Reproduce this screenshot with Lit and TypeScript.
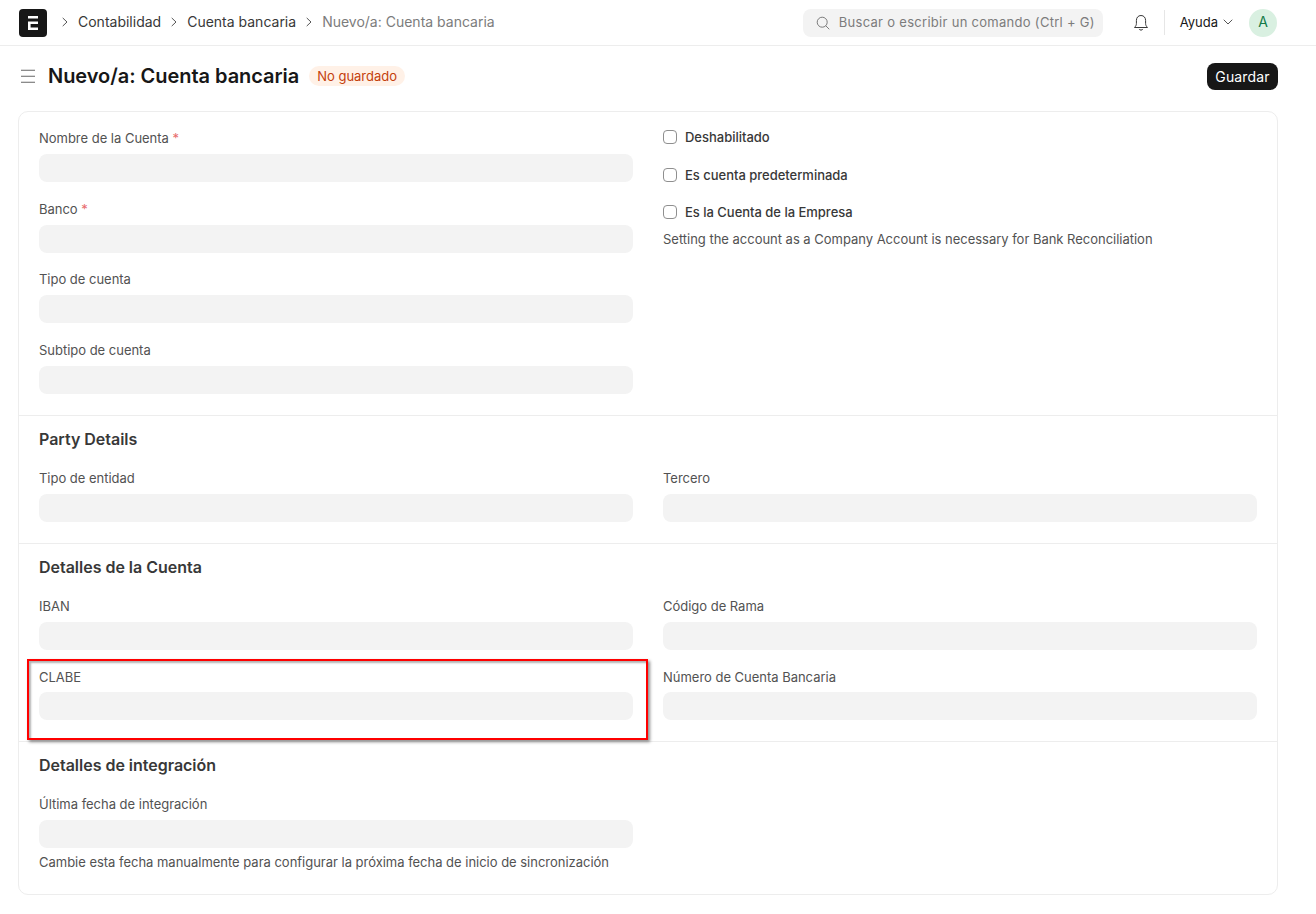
import { LitElement, html, css, svg } from "lit";
import { customElement } from "lit/decorators.js";

const chevron = svg`<svg class="chev" width="8" height="10" viewBox="0 0 8 10" fill="none"><path d="M2 1.2 L6 5 L2 8.8" stroke="#555" stroke-width="1" stroke-linecap="round" stroke-linejoin="round"/></svg>`;

@customElement("app-root")
export class AppRoot extends LitElement {
  static styles = css`
    :host { display: block; position: relative; width: 1316px; height: 914px; background: #fff; overflow: hidden;
      font-family: Inter, "Liberation Sans", sans-serif; font-size: 13px; color: #525252; letter-spacing: -0.018px; }
    * { box-sizing: border-box; }
    .nav { height: 46px; border-bottom: 1px solid #ededed; display: flex; align-items: center; padding: 0 39px 0 19px; }
    .logo { width: 28px; height: 28px; flex: none; display: block; margin-right: 14px; }
    .crumbs { display: flex; align-items: center; font-size: 14px; color: #383838; margin-bottom: 2px; letter-spacing: 0; }
    .chev { flex: none; margin-right: 9px; }
    .crumb { margin-right: 9px; }
    .crumb.cur { color: #7c7c7c; }
    .search { margin-left: auto; width: 300px; height: 28px; flex: none; background: #f3f3f3; border-radius: 8px; display: flex; align-items: center;
      padding-left: 13px; gap: 9px; color: #7c7c7c; letter-spacing: 0.29px; white-space: nowrap; }
    .search svg { flex: none; }
    .search span { margin-bottom: 2px; }
    .bell { margin-left: 30px; flex: none; }
    .divider { width: 1px; height: 25px; background: #e6e6e6; margin: 0 15px; flex: none; }
    .help { color: #171717; display: flex; align-items: center; gap: 5px; margin-bottom: 2px; }
    .avatar { width: 28px; height: 28px; border-radius: 50%; background: #d9f0e1; color: #137a48; display: flex; align-items: center; justify-content: center;
      font-size: 14px; margin-left: 16px; flex: none; padding-bottom: 2px; }
    .head { display: flex; align-items: center; height: 65px; padding: 0 38px 6px 21px; }
    .menu { flex: none; margin-right: 13px; }
    h1 { margin: 0; font-size: 20px; font-weight: 600; color: #171717; line-height: 28px; letter-spacing: -0.04px; }
    .badge { margin-left: 10px; height: 20px; padding: 0 8px; border-radius: 10px; background: #fff1e7; color: #c4400b; display: flex; align-items: center; }
    .save { margin-left: auto; margin-top: 2px; width: 71px; height: 27px; border: none; padding: 0; border-radius: 8px; background: #171717; color: #fff; font: inherit; font-size: 14px; letter-spacing: 0.01em; }
    .card { margin: 0 38px 0 18px; height: 784px; border: 1px solid #ededed; border-radius: 10px; }
    .section { padding: 0 20px 21px; border-bottom: 1px solid #ededed; }
    .section:last-child { border-bottom: none; }
    .section.first { padding-top: 18px; }
    .section.first .col { gap: 18.67px; }
    h2 { margin: 13px 0 21px; font-size: 16px; font-weight: 600; line-height: 20px; color: #383838; }
    .grid { display: grid; grid-template-columns: 594px 594px; column-gap: 30px; }
    .col { display: flex; flex-direction: column; gap: 18.5px; min-width: 0; }
    .label { display: block; height: 16px; line-height: 17.5px; margin-bottom: 8px; }
    .acct .col > div:last-child .label { line-height: 18px; }
    .req { color: #e86c6c; }
    .input { height: 28px; background: #f3f3f3; border-radius: 8px; }
    .desc { margin-top: 6px; line-height: 16px; }
    .checks { display: flex; flex-direction: column; gap: 21.5px; margin-top: -1px; }
    .check { display: flex; align-items: center; gap: 8px; height: 16px; color: #383838; font-weight: 500; }
    .box { width: 14px; height: 14px; flex: none; border: 1px solid #8f8f8f; border-radius: 4px; background: #fff; }
    .checkdesc { margin-top: -10.5px; }
    .mark { position: absolute; left: 27px; top: 659px; width: 621px; height: 81px; border: 2px solid #f00; box-shadow: 2px 2px 3px rgba(0,0,0,0.45), inset 2px 2px 2px rgba(0,0,0,0.3); pointer-events: none; }
  `;

  private field(label: string, req = false) {
    return html`<div><span class="label">${label}${req ? html` <span class="req">*</span>` : ""}</span><div class="input"></div></div>`;
  }

  render() {
    return html`
      <div class="nav">
        <svg class="logo" viewBox="0 0 28 28"><rect width="28" height="28" rx="4" fill="#171717"/><path d="M9 7h10v2.4H9zM9 12.6h10V15h-7.4v3.6H19V21H9z" fill="#fff"/></svg>
        <div class="crumbs">
          ${chevron}<span class="crumb">Contabilidad</span>
          ${chevron}<span class="crumb">Cuenta bancaria</span>
          ${chevron}<span class="crumb cur">Nuevo/a: Cuenta bancaria</span>
        </div>
        <div class="search">
          <svg width="14" height="14" viewBox="0 0 14 14" fill="none"><circle cx="6.2" cy="6.2" r="5" stroke="#7c7c7c"/><path d="M9.9 9.9 L13 13" stroke="#7c7c7c" stroke-linecap="round"/></svg>
          <span>Buscar o escribir un comando (Ctrl + G)</span>
        </div>
        <svg class="bell" width="16" height="18" viewBox="0 0 16 18" fill="none"><path d="M8 1.5 C5 1.5 3.4 3.8 3.4 6.5 V9.5 C3.4 11.3 2.6 12.3 1.5 13.5 H14.5 C13.4 12.3 12.6 11.3 12.6 9.5 V6.5 C12.6 3.8 11 1.5 8 1.5 Z" stroke="#383838" stroke-linejoin="round"/><path d="M6.3 15.3 C6.8 16.5 9.2 16.5 9.7 15.3" stroke="#383838" stroke-linecap="round"/></svg>
        <div class="divider"></div>
        <div class="help">Ayuda
          <svg width="10" height="6" viewBox="0 0 10 6" fill="none"><path d="M1 1 L5 5 L9 1" stroke="#555" stroke-linecap="round" stroke-linejoin="round"/></svg>
        </div>
        <div class="avatar">A</div>
      </div>
      <div class="head">
        <svg class="menu" width="14" height="14" viewBox="0 0 14 14" fill="none"><path d="M0 1.25h14M0 7.25h14M0 13.25h14" stroke="#666"/></svg>
        <h1>Nuevo/a: Cuenta bancaria</h1>
        <span class="badge">No guardado</span>
        <button class="save">Guardar</button>
      </div>
      <div class="card">
        <div class="section first">
          <div class="grid">
            <div class="col">
              ${this.field("Nombre de la Cuenta", true)}
              ${this.field("Banco", true)}
              ${this.field("Tipo de cuenta")}
              ${this.field("Subtipo de cuenta")}
            </div>
            <div>
              <div class="checks">
                <div class="check"><span class="box"></span>Deshabilitado</div>
                <div class="check"><span class="box"></span>Es cuenta predeterminada</div>
                <div class="check"><span class="box"></span>Es la Cuenta de la Empresa</div>
                <div class="checkdesc desc">Setting the account as a Company Account is necessary for Bank Reconciliation</div>
              </div>
            </div>
          </div>
        </div>
        <div class="section">
          <h2>Party Details</h2>
          <div class="grid">
            <div class="col">${this.field("Tipo de entidad")}</div>
            <div class="col">${this.field("Tercero")}</div>
          </div>
        </div>
        <div class="section acct">
          <h2>Detalles de la Cuenta</h2>
          <div class="grid">
            <div class="col">${this.field("IBAN")}${this.field("CLABE")}</div>
            <div class="col">${this.field("Código de Rama")}${this.field("Número de Cuenta Bancaria")}</div>
          </div>
        </div>
        <div class="section">
          <h2>Detalles de integración</h2>
          <div class="grid">
            <div class="col">
              <div>
                <span class="label">Última fecha de integración</span>
                <div class="input"></div>
                <div class="desc">Cambie esta fecha manualmente para configurar la próxima fecha de inicio de sincronización</div>
              </div>
            </div>
          </div>
        </div>
      </div>
      <div class="mark"></div>
    `;
  }
}
